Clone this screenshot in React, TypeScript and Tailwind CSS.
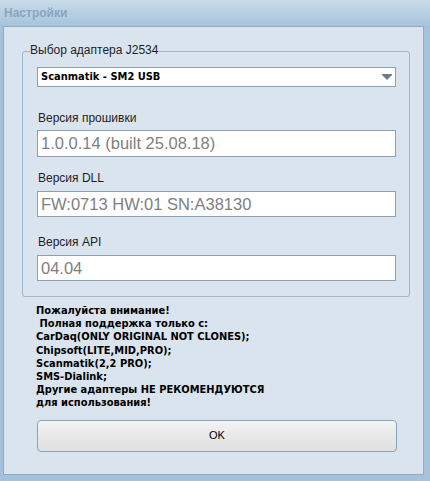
import React from "react";

const ui = { fontFamily: '"Liberation Sans", Arial, sans-serif' };
const tahoma = { fontFamily: '"DejaVu Sans Condensed", "DejaVu Sans", sans-serif' };

const Label: React.FC<{ text: string; className?: string }> = ({ text, className = "" }) => (
  <div className={`h-[14px] leading-[14px] text-[12px] text-[#1e1e1e] pl-[1px] ${className}`}>{text}</div>
);

const Field: React.FC<{ value: string; className?: string }> = ({ value, className = "" }) => (
  <div
    className={`w-[359px] bg-white border border-[#8c9fb3] flex items-center pl-[3px] text-[16.5px] text-[#7f7f7f] ${className}`}
  >
    {value}
  </div>
);

const warning = [
  "Пожалуйста внимание!",
  "\u00a0Полная поддержка только с:",
  "CarDaq(ONLY ORIGINAL NOT CLONES);",
  "Chipsoft(LITE,MID,PRO);",
  "Scanmatik(2,2 PRO);",
  "SMS-Dialink;",
  "Другие адаптеры НЕ РЕКОМЕНДУЮТСЯ",
  "для использования!",
];

export default function App() {
  return (
    <div
      className="w-[430px] h-[481px] bg-[#a5c2da] flex flex-col overflow-hidden"
      style={ui}
    >
      {/* title bar */}
      <div className="h-[26px] shrink-0 bg-gradient-to-b from-[#c9dbea] to-[#a7c4db] flex items-center pl-[4px]">
        <span className="text-[12px] font-bold text-[#8aa5be]">Настройки</span>
      </div>

      {/* client area */}
      <div className="ml-[3px] w-[421px] h-[449px] shrink-0 bg-[#dae4ee] border border-[#8eadc8] flex flex-col">
        {/* group box */}
        <div className="relative ml-[18px] mt-[24px] w-[388px] border border-[#a2b6c9] rounded-[3px] pt-[15px] pb-[15px] pl-[14px]">
          <span className="absolute left-[7px] top-[-9px] bg-[#dae4ee] pr-[1px] text-[12px] leading-[14px] text-[#1e1e1e]">
            Выбор адаптера J2534
          </span>

          <div className="w-[359px] h-[20px] bg-white border border-[#8c9fb3] flex items-center justify-between pl-[3px] pr-[3px]">
            <span className="text-[11px] font-bold text-black" style={tahoma}>
              Scanmatik - SM2 USB
            </span>
            <svg width="10" height="6" viewBox="0 0 10 6">
              <rect x="0" y="0" width="10" height="1" fill="#6c7c8d" />
              <polygon points="0,1 10,1 5,6" fill="#6c7c8d" />
            </svg>
          </div>

          <Label text="Версия прошивки" className="mt-[24px]" />
          <Field value="1.0.0.14 (built 25.08.18)" className="mt-[5px] h-[27px]" />

          <Label text="Версия DLL" className="mt-[14px]" />
          <Field value="FW:0713 HW:01 SN:A38130" className="mt-[6px] h-[26px]" />

          <Label text="Версия API" className="mt-[18px]" />
          <Field value="04.04" className="mt-[6px] h-[26px]" />
        </div>

        {/* warning */}
        <div
          className="ml-[32px] mt-[7px] text-[11px] leading-[13.2px] font-bold text-black whitespace-pre"
          style={tahoma}
        >
          {warning.map((l) => (
            <div key={l}>{l}</div>
          ))}
        </div>

        {/* ok button */}
        <button className="ml-[33px] mt-[10px] w-[360px] h-[32px] rounded-[4px] border border-[#8fa3b8] bg-gradient-to-b from-[#f3f3f3] to-[#dfdfdf] text-[11px] text-black">
          OK
        </button>
      </div>
    </div>
  );
}
